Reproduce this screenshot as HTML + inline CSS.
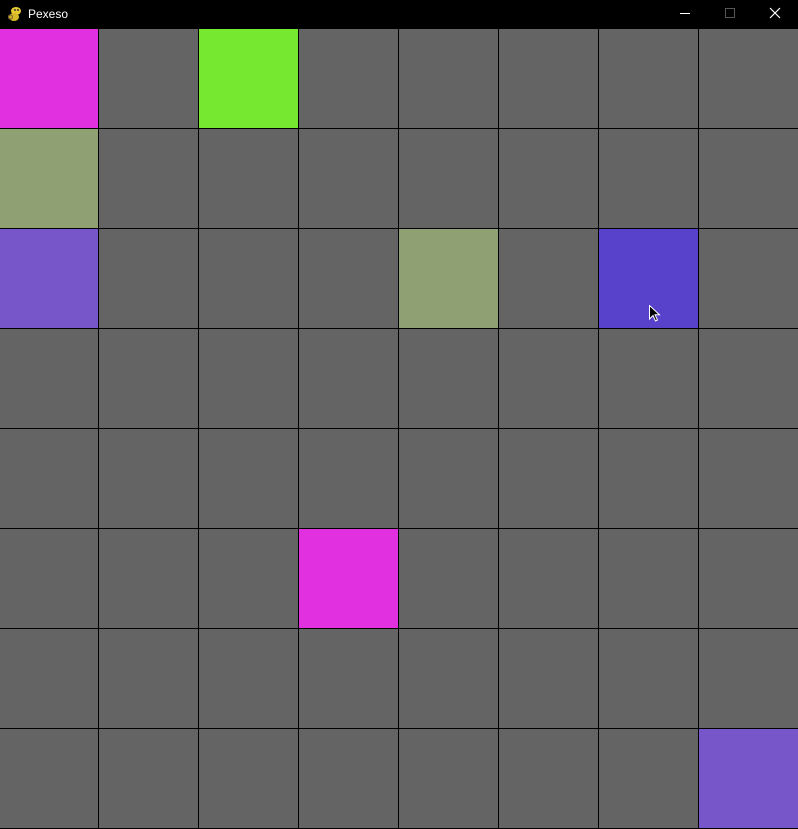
<!DOCTYPE html>
<html><head><style>
html,body{margin:0;padding:0;width:798px;height:829px;overflow:hidden;background:#000;position:relative;font-family:"Liberation Sans",sans-serif}
.c{position:absolute;width:99px;height:99px;background:#646464}
#tb{position:absolute;left:0;top:0;width:798px;height:28px;background:#000;color:#fff;font-size:12px}
</style></head><body>
<div id="tb">
<svg style="position:absolute;left:7px;top:6px" width="16" height="16" viewBox="0 0 16 16"><ellipse cx="9" cy="5" rx="5" ry="4" fill="#e8c830"/><ellipse cx="7" cy="11" rx="5" ry="4" fill="#d8b828"/><circle cx="3.5" cy="11" r="2" fill="none" stroke="#7a6a30" stroke-width="1.2"/><circle cx="8" cy="4" r="1" fill="#333"/><circle cx="11" cy="4" r="1" fill="#333"/></svg>
<span style="position:absolute;left:28px;top:7px">Pexeso</span>
<div style="position:absolute;left:680px;top:13px;width:10px;height:1px;background:#fff"></div>
<div style="position:absolute;left:725px;top:8px;width:8px;height:8px;border:1px solid #555"></div>
<svg style="position:absolute;left:769px;top:7px" width="12" height="12" viewBox="0 0 12 12"><path d="M1 1L11 11M11 1L1 11" stroke="#fff" stroke-width="1.2"/></svg>
</div>
<div id="g"></div>
<script>
var col={"0,0":"#e030e0","0,2":"#77e830","1,0":"#8fa072","2,0":"#7656c8","2,4":"#8fa072","2,6":"#5842cc","5,3":"#e030e0","7,7":"#7656c8"};
var h="";
for(var r=0;r<8;r++)for(var c=0;c<8;c++){var k=r+","+c;h+='<div class="c" style="left:'+(100*c-1)+'px;top:'+(29+100*r)+'px'+(col[k]?';background:'+col[k]:'')+'"></div>';}
document.getElementById("g").innerHTML=h;
</script>
<svg style="position:absolute;left:649px;top:305px" width="12" height="18" viewBox="0 0 12 18"><path d="M0.5 0.5L0.5 14L4 10.5L6.5 16L8.5 15L6 9.8L10.5 9.8Z" fill="#000" stroke="#fff" stroke-width="1"/></svg>
</body></html>
